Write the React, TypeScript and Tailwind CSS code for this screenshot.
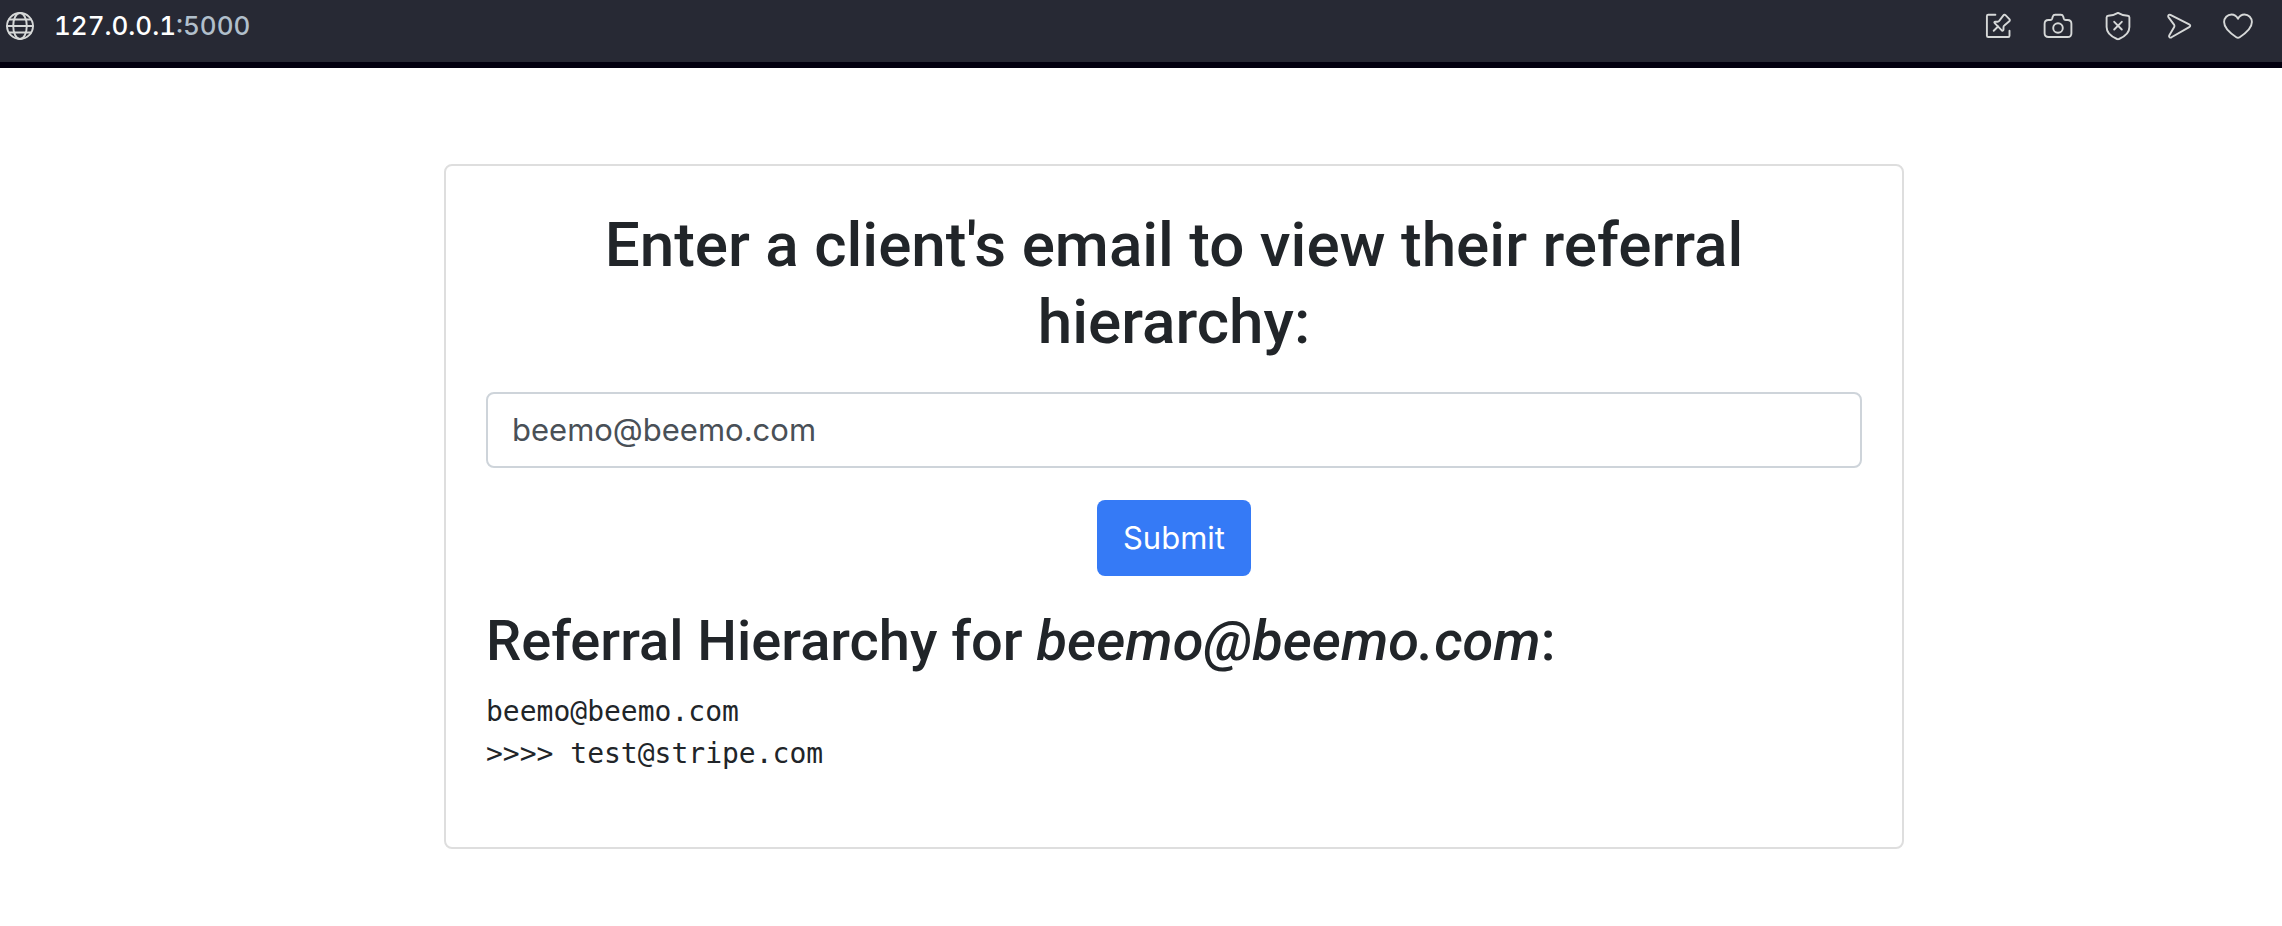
import { useState } from "react";
import type { ReactNode } from "react";

function Icon({ children }: { children: ReactNode }) {
  return (
    <svg
      viewBox="0 0 32 32"
      className="size-8"
      fill="none"
      stroke="currentColor"
      strokeWidth="1.9"
      strokeLinecap="round"
      strokeLinejoin="round"
      aria-hidden="true"
    >
      {children}
    </svg>
  );
}

const actions = [
  {
    label: "Pin page",
    icon: (
      <>
        <path d="M13.4 4.7H6.2a1.3 1.3 0 0 0-1.3 1.3v19.7a1.3 1.3 0 0 0 1.3 1.3h20a1.3 1.3 0 0 0 1.3-1.3v-5" />
        <path d="M11.7 20.8l4.4-4.3" />
        <path d="M20 20.6l-7.3-7.4c-.7-.7-.3-1.5.6-1.5h2.4c.7 0 1.1-.3 1.5-.8l4.2-5.5c.6-.7 1.5-.8 2.1-.2l3.9 3.9c.6.6.6 1.5-.1 2.1l-5 4.2c-.5.4-.8.9-.8 1.5v2.5c0 1-.9 1.8-1.5 1.2z" />
      </>
    ),
  },
  {
    label: "Snapshot",
    icon: (
      <>
        <path d="M6.4 10h1.9c1 0 1.6-.5 1.9-1.4l.6-2.1c.4-1.3 1.1-1.8 2.3-1.8h5.8c1.2 0 1.9.5 2.3 1.8l.6 2.1c.3.9.9 1.4 1.9 1.4h1.9c2.4 0 3.8 1.4 3.8 3.8v9.4c0 2.4-1.4 3.8-3.8 3.8H6.4c-2.4 0-3.8-1.4-3.8-3.8v-9.4c0-2.4 1.4-3.8 3.8-3.8z" />
        <circle cx="16" cy="18" r="4.8" />
      </>
    ),
  },
  {
    label: "Ad blocker",
    icon: (
      <>
        <path d="M16 2.9c3.3 2 6.6 2.7 9.8 2.9 1 .1 1.6.6 1.6 1.6v9.7c0 5.7-5.1 9.8-10.4 11.9-.7.3-1.3.3-2 0C9.7 26.9 4.6 22.8 4.6 17.1V7.4c0-1 .6-1.5 1.6-1.6 3.2-.2 6.5-.9 9.8-2.9z" />
        <path d="M12.2 11.8l7.6 7.7M19.8 11.8l-7.6 7.7" />
      </>
    ),
  },
  {
    label: "Send",
    icon: (
      <path d="M8.4 4.9l18.8 9.5c1.4.7 1.4 2 0 2.7L9.5 27.3c-1.5.8-2.9-.3-2.3-1.9l5-8.5c.4-.7.4-1.3 0-2L6.4 7.1c-.8-1.5.5-2.9 2-2.2z" />
    ),
  },
  {
    label: "Bookmark",
    icon: (
      <path d="M16 8.7C14.4 5.7 12 4.5 9.5 4.5c-4.2 0-7.4 3.4-7.4 7.6 0 6.2 6.3 11.3 12.2 15.1 1.2.8 2.2.8 3.4 0C23.6 23.4 29.9 18.3 29.9 12.1c0-4.2-3.2-7.6-7.4-7.6-2.5 0-4.9 1.2-6.5 4.2z" />
    ),
  },
];

function AddressBar() {
  return (
    <header className="flex items-start justify-between border-b-6 border-[#02000f] bg-[#272934] pt-[10px] pr-7 pb-5 pl-1 text-[#d6d8d8]">
      <div className="flex items-center gap-[18px]">
        <Icon>
          <circle cx="16" cy="16" r="13" />
          <ellipse cx="16" cy="16" rx="6.8" ry="13" />
          <path d="M3 16h26M4.9 9.5h22.2M4.9 22.5h22.2" />
        </Icon>
        <p className="text-[26px] leading-8 font-medium text-white tabular-nums">
          127.0.0.1<span className="text-[#b1bfcb]">:5000</span>
        </p>
      </div>
      <nav className="flex gap-7">
        {actions.map((action) => (
          <button key={action.label} type="button" aria-label={action.label}>
            <Icon>{action.icon}</Icon>
          </button>
        ))}
      </nav>
    </header>
  );
}

export default function App() {
  const [email, setEmail] = useState("");
  return (
    <div className="min-h-screen bg-white font-['Inter',sans-serif] text-[#212529]">
      <AddressBar />
      <main className="pt-24 pr-8 pb-16 pl-[98px]">
        <section className="mx-auto max-w-[1460px] rounded-lg border-2 border-[#dedede] p-10">
          <form
            className="flex flex-col items-center gap-8"
            onSubmit={(event) => event.preventDefault()}
          >
            <h1 className="text-center font-['Roboto',sans-serif] text-[62px] leading-[77px] font-medium">
              <label htmlFor="email">
                Enter a client's email to view their referral hierarchy:
              </label>
            </h1>
            <input
              id="email"
              type="email"
              placeholder="beemo@beemo.com"
              value={email}
              onChange={(event) => setEmail(event.target.value)}
              className="w-full rounded-lg border-2 border-[#ced4da] px-6 py-3 text-[31px] leading-12 placeholder:text-[#495057]"
            />
            <button
              type="submit"
              className="rounded-lg bg-[#357af6] px-[26px] py-[14px] text-[31px] leading-12 text-white"
            >
              Submit
            </button>
          </form>
          <h2 className="mt-8 font-['Roboto',sans-serif] text-[56px] leading-[67px] font-medium">
            Referral Hierarchy for <em>beemo@beemo.com</em>:
          </h2>
          <pre className="mt-4 mb-8 font-['DejaVu_Sans_Mono',monospace] text-[28px] leading-[42px]">
            {"beemo@beemo.com\n>>>> test@stripe.com"}
          </pre>
        </section>
      </main>
    </div>
  );
}
